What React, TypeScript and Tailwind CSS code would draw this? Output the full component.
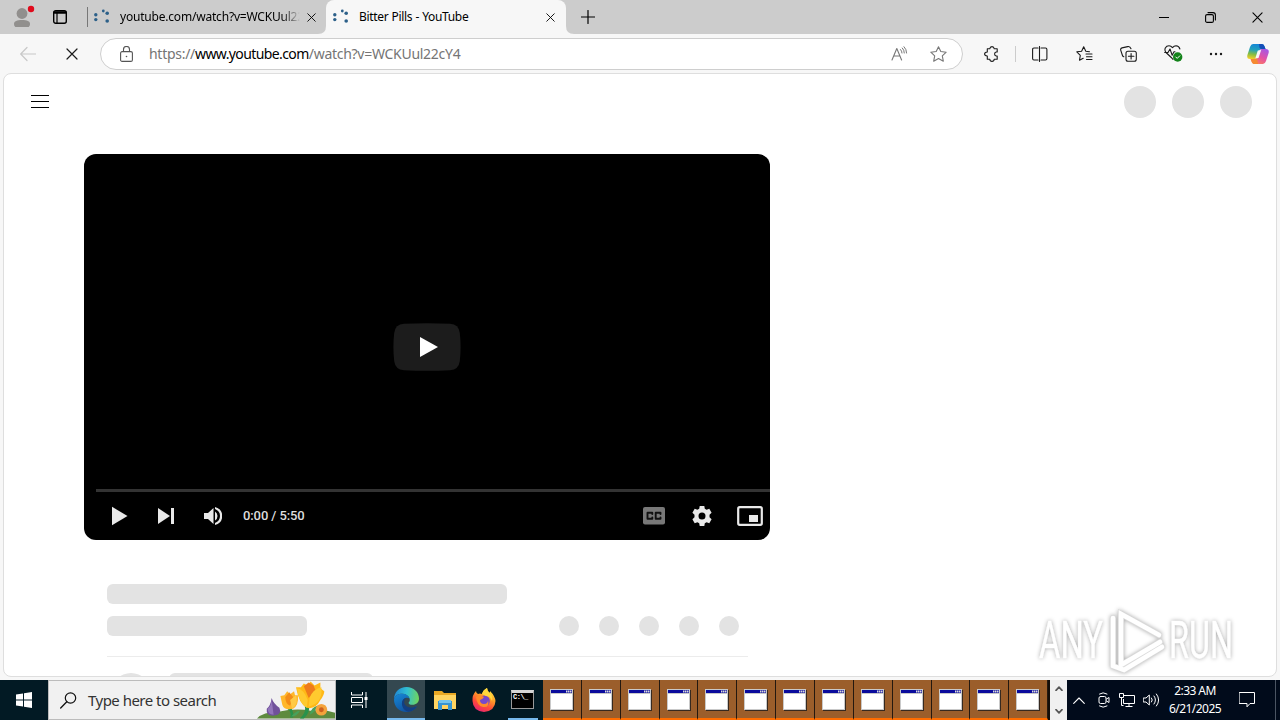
import type { ReactNode } from "react";

type IconProps = {
  w: number;
  h?: number;
  box?: string;
  className?: string;
  children: ReactNode;
};

const Icon = ({ w, h = w, box, className = "", children }: IconProps) => (
  <svg
    width={w}
    height={h}
    viewBox={box ?? `0 0 ${w} ${h}`}
    fill="none"
    stroke="currentColor"
    strokeLinecap="round"
    strokeLinejoin="round"
    className={`block shrink-0 ${className}`}
  >
    {children}
  </svg>
);

const CloseIcon = ({ size }: { size: number }) => (
  <Icon w={size} box="0 0 12 12">
    <path d="M1 1L11 11M11 1L1 11" strokeWidth="1.2" />
  </Icon>
);

const LoadingDots = () => (
  <Icon w={16}>
    <g fill="#2c6089" stroke="none">
      <circle cx="1.8" cy="5.8" r="1.7" />
      <circle cx="1.8" cy="10.6" r="1.7" />
      <circle cx="9.3" cy="2" r="1.4" />
      <circle cx="13.2" cy="4.3" r="1.8" />
      <circle cx="13.2" cy="12" r="1.8" />
    </g>
  </Icon>
);

const TabBar = () => (
  <div className="flex h-[34px] bg-[#cccccc] text-black">
    <div className="flex w-[87px] items-center pl-[14px]">
      <Icon w={22} className="mt-[-2px]">
        <g stroke="none">
          <circle cx="8" cy="8.5" r="5.4" fill="#918f8d" />
          <path d="M0 19c0-3 3-4 8-4s8 1 8 4-3 5-8 5-8-2-8-5z" fill="#918f8d" />
          <circle cx="17" cy="4" r="3.2" fill="#e00b1c" />
        </g>
      </Icon>
      <Icon w={14} className="ml-[17px]">
        <rect x="0.7" y="0.7" width="12.6" height="12.6" rx="2" strokeWidth="1.4" />
        <path d="M1.5 2.5H12.5" strokeWidth="2.4" />
        <path d="M4 3V13" strokeWidth="1.2" />
      </Icon>
    </div>
    <div className="flex w-[239px] items-center">
      <div className="mr-[6px] h-5 w-px bg-[#777]" />
      <LoadingDots />
      <p className="ml-[10px] w-[180px] overflow-hidden whitespace-nowrap bg-gradient-to-r from-black from-88% to-[#cccccc] bg-clip-text font-['Noto_Sans',sans-serif] text-[12px] tracking-[-0.2px] text-transparent">
        youtube.com/watch?v=WCKUul22
      </p>
      <div className="ml-[7px]">
        <CloseIcon size={9} />
      </div>
    </div>
    <div className="relative flex w-[240px] items-center rounded-t-lg bg-[#f7f7f7] pl-[7px]">
      <LoadingDots />
      <p className="ml-[10px] w-[187px] whitespace-nowrap font-['Noto_Sans',sans-serif] text-[12px] tracking-[-0.34px] [word-spacing:0.5px]">
        Bitter Pills - YouTube
      </p>
      <CloseIcon size={9} />
      <Icon w={8} className="absolute bottom-0 -left-2">
        <path d="M8 0V8H0Q8 8 8 0Z" fill="#f7f7f7" stroke="none" />
      </Icon>
      <Icon w={8} className="absolute -right-2 bottom-0">
        <path d="M0 0V8H8Q0 8 0 0Z" fill="#f7f7f7" stroke="none" />
      </Icon>
    </div>
    <div className="ml-[15px] flex items-center">
      <Icon w={14}>
        <path d="M7 0.5V13.5M0.5 7H13.5" strokeWidth="1.2" />
      </Icon>
    </div>
    <div className="mr-[17px] ml-auto flex items-center">
      <Icon w={10}>
        <path d="M0 5.5H10" />
      </Icon>
      <Icon w={11} className="ml-[36px]">
        <rect x="0.6" y="2.6" width="7.8" height="7.8" rx="1.5" strokeWidth="1.1" />
        <path d="M3 0.6H8Q10.4 0.6 10.4 3V8" strokeWidth="1.1" />
      </Icon>
      <div className="ml-[36px]">
        <CloseIcon size={11} />
      </div>
    </div>
  </div>
);

const Toolbar = () => (
  <div className="flex h-[39px] items-center bg-[#f7f7f7] text-[#1b1b1b]">
    <Icon w={16} className="ml-5 text-[#c8c8c8]">
      <path d="M15.5 8H1M7 1.5L0.7 8L7 14.5" strokeWidth="1.2" />
    </Icon>
    <div className="ml-[30px] flex w-[34px]">
      <CloseIcon size={12} />
    </div>
    <div className="flex h-[32px] w-[863px] items-center rounded-full border border-[#cecece] bg-white pr-[15px] pl-[19px]">
      <Icon w={13} h={16} className="text-[#555]">
        <rect x="0.6" y="5.6" width="11.8" height="9.8" rx="1.5" strokeWidth="1.1" />
        <path d="M3.5 5.5V3.5a3 3 0 0 1 6 0V5.5" strokeWidth="1.1" />
        <circle cx="6.5" cy="10.5" r="0.8" fill="currentColor" stroke="none" />
      </Icon>
      <p className="ml-[16px] whitespace-nowrap font-['Noto_Sans',sans-serif] text-[14px] tracking-[-0.28px] text-[#757575]">
        https://<span className="tracking-[-0.6px] text-black">www.youtube.com</span>/watch?v=WCKUul22cY4
      </p>
      <Icon w={17} h={16} className="ml-auto text-[#777]">
        <path d="M1 14L5.8 2.5L10.6 14M2.8 10H8.8" strokeWidth="1.1" />
        <path d="M9.5 3.5Q11 5 11 7M11.3 2Q13.3 4 13.3 7M13 0.7Q15.6 3.3 15.6 7" />
      </Icon>
      <Icon w={17} h={16} className="ml-[22px] text-[#777]">
        <path d="M8.5 0.7L10.8 5.5L16.2 6.2L12.3 9.9L13.3 15.2L8.5 12.6L3.7 15.2L4.7 9.9L0.8 6.2L6.2 5.5Z" strokeWidth="1.1" />
      </Icon>
    </div>
    <Icon w={16} className="ml-[21px]">
      <path d="M3.3 2.7H5.8Q6 0.6 8 0.6T10.2 2.7H13.2V6H12.2Q10.6 6.2 10.6 8T12.2 10H13.2V13.2H10.2Q10 15.4 8 15.4T5.8 13.2H3.3V10Q0.6 9.9 0.6 8T3.3 6Z" strokeWidth="1.1" />
    </Icon>
    <div className="ml-[15px] h-4 w-px bg-[#ccc]" />
    <Icon w={16} className="ml-[16px]">
      <path d="M6 2H2Q0.6 2 0.6 3.4V12.6Q0.6 14 2 14H6M9 2H13.5Q14.9 2 14.9 3.4V12.6Q14.9 14 13.5 14H9M7.5 0.5V15.5" strokeWidth="1.1" />
    </Icon>
    <Icon w={17} h={16} className="ml-[28px]">
      <path d="M13.5 5.7L9.8 5.2L7.7 0.8L5.6 5.2L0.8 5.8L4.3 9.3L3.5 14.2L7.2 12.3M10 8H16M10.5 10.8H16M10.5 13.5H16" strokeWidth="1.1" />
    </Icon>
    <Icon w={17} h={16} className="ml-[27px]">
      <rect x="6" y="5.3" width="10.3" height="10" rx="2" strokeWidth="1.1" />
      <path d="M11.1 7.5V13M8.4 10.2H13.9M3.8 10.8Q2.7 10.4 2.3 9L0.7 4.1Q0.3 2.4 2 1.9L7.7 0.6Q10 0.2 11 2.8" strokeWidth="1.1" />
    </Icon>
    <Icon w={19} h={17} className="ml-[27px]">
      <path d="M9 14.3L7.8 13L2 7.5Q0.3 5.4 1.3 3Q2.5 0.8 5 0.8Q7 0.8 8.5 2.6Q10 0.8 12 0.8Q15 1 15.9 4" strokeWidth="1.1" />
      <path d="M0.7 7.5H4L6 4L8.2 10.2L10 6.8H11" strokeWidth="1.1" />
      <circle cx="13.7" cy="12" r="4.7" fill="#13831a" stroke="none" />
      <path d="M11.8 12L13.2 13.4L15.8 10.8" stroke="white" />
    </Icon>
    <Icon w={14} h={4} className="ml-[26px]">
      <g fill="currentColor" stroke="none">
        <circle cx="2" cy="2" r="1.2" />
        <circle cx="7" cy="2" r="1.2" />
        <circle cx="12" cy="2" r="1.2" />
      </g>
    </Icon>
    <CopilotLogo />
  </div>
);

const CopilotLogo = () => (
  <Icon w={22} h={20} className="ml-6">
    <defs>
      <linearGradient id="cpA" x1="0.5" y1="0" x2="0.3" y2="1">
        <stop offset="0" stopColor="#1585d8" />
        <stop offset="0.4" stopColor="#22a2bb" />
        <stop offset="0.7" stopColor="#87bd42" />
        <stop offset="1" stopColor="#f1ce29" />
      </linearGradient>
      <linearGradient id="cpB" x1="0.8" y1="0" x2="0.2" y2="1">
        <stop offset="0" stopColor="#a558e5" />
        <stop offset="0.5" stopColor="#e452a4" />
        <stop offset="1" stopColor="#ff8454" />
      </linearGradient>
    </defs>
    <g stroke="none">
      <path d="M6 0H15Q17 0 17.8 3L18.5 5H15Q12.5 5 11.7 8L10 13Q9.2 15 7 15H3Q-0.5 15 0.4 11L3 3Q4 0 6 0Z" fill="url(#cpA)" />
      <path d="M12 0H15Q17 0 17.8 3L18.5 5H15Q13 5 12.4 3.5Z" fill="#154fb8" />
      <path d="M16 20H7Q5 20 4.2 17L3.5 15H7Q9.5 15 10.3 12L12 7Q12.8 5 15 5H19Q22.5 5 21.6 9L19 17Q18 20 16 20Z" fill="url(#cpB)" />
      <path d="M4 15H7Q9 15 9.8 13L11 20H7Q5 20 4 15Z" fill="#f58a32" />
      <path d="M10.8 6.5L14.2 6L11.5 14L8.3 14.5Z" fill="#f7f7f7" />
    </g>
  </Icon>
);

const Player = () => (
  <div className="relative flex h-[386px] w-[686px] flex-col overflow-hidden rounded-xl bg-black text-[#e9e9e9]">
    <div className="flex h-[335px] items-end justify-center pb-[118px]">
      <Icon w={68} h={48}>
        <path d="M11 0.8Q34 -0.5 57 0.8Q65.8 1.4 66.8 10Q68.4 24 66.8 38Q65.8 46.6 57 47.2Q34 48.5 11 47.2Q2.2 46.6 1.2 38Q-0.4 24 1.2 10Q2.2 1.4 11 0.8Z" fill="#1c1c1c" stroke="none" />
        <path d="M27 14L45 24L27 34Z" fill="white" stroke="none" />
      </Icon>
    </div>
    <div className="ml-3 h-[3px] shrink-0 bg-[#333]" />
    <div className="flex h-[48px] items-center pr-[7px] pl-[28px]">
      <Icon w={16} h={20}>
        <path d="M0 0.8L15.5 10L0 19.2Z" fill="currentColor" stroke="none" />
      </Icon>
      <Icon w={17} h={18} className="ml-[30px]">
        <path d="M0 1L12 9L0 17ZM13 1H16V17H13Z" fill="currentColor" stroke="none" />
      </Icon>
      <Icon w={18} h={18} className="ml-[29px]">
        <path d="M0 6V12H4L9.5 17V1L4 6ZM11 4.5V13.5Q13.5 12 13.5 9T11 4.5ZM11 0V2.1Q16 4 16 9T11 15.9V18Q18.2 16 18.2 9T11 0Z" fill="currentColor" stroke="none" />
      </Icon>
      <p className="mb-[1px] ml-[21px] font-['Roboto',sans-serif] text-[13px] font-medium tracking-[-0.1px] whitespace-nowrap text-[#ddd]">
        0:00 / 5:50
      </p>
      <Icon w={22} h={18} className="ml-auto">
        <rect width="22" height="17.5" rx="2" fill="#787878" stroke="none" />
        <path d="M9.3 7V5.8H4.5V11.7H9.3V10.5M17.5 7V5.8H12.7V11.7H17.5V10.5" stroke="#111" strokeWidth="1.9" />
      </Icon>
      <Icon w={20} className="ml-[27px]">
        <path
          fillRule="evenodd"
          fill="currentColor"
          stroke="none"
          d="M7.7 0H12.3L12.8 2.8L14.6 3.8L17.3 2.8L19.6 6.8L17.5 8.8V11.2L19.6 13.2L17.3 17.2L14.6 16.2L12.8 17.2L12.3 20H7.7L7.2 17.2L5.4 16.2L2.7 17.2L0.4 13.2L2.5 11.2V8.8L0.4 6.8L2.7 2.8L5.4 3.8L7.2 2.8ZM10 6.5A3.5 3.5 0 1 0 10 13.5A3.5 3.5 0 1 0 10 6.5Z"
        />
      </Icon>
      <Icon w={26} h={20} className="ml-[25px]">
        <rect x="1.2" y="1.2" width="23.6" height="17.6" rx="1.5" strokeWidth="2.2" />
        <path d="M12 9H21V16H12Z" fill="currentColor" stroke="none" />
      </Icon>
    </div>
  </div>
);

const Watermark = () => (
  <Icon w={206} h={70} className="absolute right-[37px] bottom-[-1px] overflow-visible drop-shadow-[0_0_2px_#a8a8a8]">
    <g fill="white" stroke="white" strokeWidth="0.5" fontFamily="Roboto, sans-serif" fontSize="52" fontWeight="400">
      <text x="6" y="51" textLength="64" lengthAdjust="spacingAndGlyphs">ANY</text>
      <text x="136" y="51" textLength="64" lengthAdjust="spacingAndGlyphs">RUN</text>
    </g>
    <g strokeLinejoin="miter">
      <path d="M80 54V11M88 58V7L126 28M88 58L127 35M80 54V59L91 63L129 40" stroke="#dcdcdc" strokeWidth="6" />
      <path d="M80 54V11M88 58V7L126 28M88 58L127 35M80 54V59L91 63L129 40" stroke="white" strokeWidth="4.6" />
    </g>
  </Icon>
);

const Page = () => (
  <div className="h-[607px] bg-[#f7f7f7] px-[3px]">
    <main className="relative h-[604px] overflow-hidden rounded-lg border border-[#dedede] bg-white">
      <header className="flex h-[56px] items-center justify-between pr-[24px] pl-[27px]">
        <Icon w={18} h={13} className="mb-[2px]">
          <path d="M0 0.5H18M0 6.5H18M0 12.5H18" stroke="black" strokeLinecap="butt" />
        </Icon>
        <div className="flex gap-4">
          {[0, 1, 2].map((idx) => (
            <div key={idx} className="size-8 rounded-full bg-[#e3e3e3]" />
          ))}
        </div>
      </header>
      <div className="mt-[24px] ml-[80px]">
        <Player />
      </div>
      <section className="mt-[44px] ml-[103px] w-[641px]">
        <div className="h-5 w-[400px] rounded-md bg-[#e3e3e3]" />
        <div className="mt-3 flex justify-between border-b border-[#ececec] pr-[9px] pb-5">
          <div className="h-5 w-[200px] rounded-md bg-[#e3e3e3]" />
          <div className="flex gap-5">
            {[0, 1, 2, 3, 4].map((idx) => (
              <div key={idx} className="size-5 rounded-full bg-[#e3e3e3]" />
            ))}
          </div>
        </div>
        <div className="mt-4 flex">
          <div className="ml-1 size-10 rounded-full bg-[#e3e3e3]" />
          <div className="ml-[18px] h-5 w-[204px] rounded-md bg-[#e3e3e3]" />
        </div>
      </section>
      <Watermark />
    </main>
  </div>
);

const Tulips = () => (
  <Icon w={78} h={38} box="0 0 80 38">
    <g stroke="none">
      <path d="M0 38Q6 31 22 31Q40 27 55 30Q68 28 80 32V38Z" fill="#5e8a3e" />
      <path d="M15 17Q17 23 23 27Q26 34 18 35Q9 36 10 28Q14 25 15 17Z" fill="#70519a" />
      <path d="M15 18L17 34Q11 34 11 28Q15 25 15 18Z" fill="#9275ba" />
      <path d="M35 27Q38 32 37 37H34Q36 31 31 28ZM53 25Q55 32 48 38H44Q51 32 49 25Z" fill="#29924c" />
      <path d="M54 34Q56 26 62 25Q60 32 54 34ZM35 36Q40 30 44 30Q41 36 35 36Z" fill="#47a15a" />
      <path d="M24 15L28 14L31 10L34 13L38 10L39 14L42 14Q43 24 37 28Q28 30 26 24Z" fill="#ffb72b" />
      <path d="M29 16L33 11L37 16L34 25Q29 23 29 16Z" fill="#f28c18" />
      <path d="M34 19L40 14Q43 23 36 28Z" fill="#ffca46" />
      <path d="M40 6L45 6L48 2L52 4L55 0L59 4L65 1L65 7L69 10Q69 14 65 19Q60 29 51 27Q43 23 40 6Z" fill="#ffb817" />
      <path d="M48 5L53 1L58 4L60 9L53 17Z" fill="#ee7b1b" />
      <path d="M41 7Q48 8 52 19L51 27Q43 22 41 7ZM54 17Q57 8 66 6Q68 22 53 26Z" fill="#ffca2f" />
      <circle cx="66" cy="29" r="6" fill="#f4a33c" />
      <circle cx="66" cy="29" r="2.5" fill="#ce601c" />
    </g>
  </Icon>
);

const EdgeLogo = () => (
  <Icon w={25} box="0 0 24 24">
    <defs>
      <linearGradient id="edgeTop" x1="0" y1="0.4" x2="1" y2="0.5">
        <stop stopColor="#2087d5" />
        <stop offset="0.5" stopColor="#31bfd2" />
        <stop offset="1" stopColor="#70d45d" />
      </linearGradient>
      <linearGradient id="edgeLow" x1="0" y1="0" x2="0.6" y2="1">
        <stop stopColor="#1689d7" />
        <stop offset="1" stopColor="#104f9c" />
      </linearGradient>
    </defs>
    <g stroke="none">
      <path d="M0 12C0 5 5 0 12 0C19 0 24 5 24 11C24 15 21 17 18 17C15 17 14 16 14 15C15 14 15.5 13 15 11C14 8 11 6.5 8 6.5C4 6.5 1 8 0 12Z" fill="url(#edgeTop)" />
      <path d="M0 12C1 8 4 6.5 8 6.5C11 6.5 14 8 15 11C12 9 8 11 8 15C8 19 12 22 18 20L22 18.5C20 22 16 24 12 24C5 24 0 19 0 12Z" fill="url(#edgeLow)" />
      <path d="M8.5 12.5C6 17 9 23 14 23.8C18 23.3 20.8 21 22.2 18.2C17 21 10.5 19.5 9.8 15C9.6 13 10.5 11.5 11.5 10.5Q9.5 11 8.5 12.5Z" fill="#123f83" />
    </g>
  </Icon>
);

const FolderIcon = () => (
  <Icon w={22} h={20}>
    <g stroke="none">
      <path d="M0 1H8L10 3H22V19H0Z" fill="#e9a824" />
      <path d="M0 5H22V19H0Z" fill="#ffd461" />
      <path d="M4 11H18V20H14V15H8V20H4Z" fill="#3694d1" />
      <path d="M5 10H17V13H5Z" fill="#72c4ee" />
    </g>
  </Icon>
);

const FirefoxLogo = () => (
  <Icon w={24}>
    <defs>
      <linearGradient id="ffBody" x1="0.8" y1="0" x2="0.3" y2="1">
        <stop stopColor="#fff04b" />
        <stop offset="0.4" stopColor="#ff9a27" />
        <stop offset="0.7" stopColor="#ff4b38" />
        <stop offset="1" stopColor="#e62372" />
      </linearGradient>
    </defs>
    <g stroke="none">
      <path d="M4 3Q4 5 6 6Q8 5 10 6Q11 2 15 0Q15 3 18 5Q18 4 18 3Q23 8 23.5 13Q23 23 12 24Q1 23 0.5 13Q0 7 4 3Z" fill="url(#ffBody)" />
      <circle cx="12.3" cy="13" r="5.5" fill="#7549cb" />
      <path d="M4 9Q8 6 12 9Q11 11 8 12Q8 16 12 16Q16 16 16 12Q18 20 11 19Q5 18 4 9Z" fill="#ff8b29" />
      <path d="M10 6Q11 2 15 0Q15 3 18 5Q21 8 20 13Q18 8 14 8Z" fill="#ffd83c" />
    </g>
  </Icon>
);

const ConsoleIcon = () => (
  <div className="h-[19px] w-[23px] border border-[#999] border-t-[3px] border-t-[#d5d5d5] bg-black pl-px font-['Liberation_Mono',monospace] text-[7px] leading-[8px] font-bold tracking-[-0.5px] text-white">
    C:\_
  </div>
);

const AppWindowIcon = () => (
  <Icon w={24} h={22} className="mt-[2px]">
    <g stroke="none">
      <path d="M1 1H24V22H1Z" fill="#36291f" />
      <path d="M0 0H23V21H0Z" fill="#c9c9c9" />
      <path d="M1 1H22V4H1Z" fill="#0a0b9c" />
      <path d="M1 5H22V20H1Z" fill="white" />
      <path d="M16 1.5H17.5V3.5H16ZM18 1.5H19.5V3.5H18ZM20 1.5H21.5V3.5H20Z" fill="#ddd" />
    </g>
  </Icon>
);

const windows = Array.from({ length: 13 }, (_, idx) => idx);

const Taskbar = () => (
  <footer className="flex h-10 bg-[#021a24]">
    <div className="flex w-[48px] items-center justify-center">
      <Icon w={16}>
        <path d="M0 2.4L7 1.4V7.5H0ZM8 1.2L16 0V7.5H8ZM0 8.5H7V14.6L0 13.6ZM8 8.5H16V16L8 14.8Z" fill="white" stroke="none" />
      </Icon>
    </div>
    <div className="flex w-[288px] items-center border border-[#bcbcbc] bg-[#f1f1f1] pl-[11px]">
      <Icon w={17} className="text-[#111]">
        <circle cx="10.5" cy="6" r="5.2" strokeWidth="1.2" />
        <path d="M6.8 9.7L0.7 16" strokeWidth="1.3" />
      </Icon>
      <p className="ml-[11px] whitespace-nowrap font-['Noto_Sans',sans-serif] text-[15px] tracking-[-0.52px] text-[#333]">
        Type here to search
      </p>
      <div className="ml-auto self-end">
        <Tulips />
      </div>
    </div>
    <div className="flex w-[51px] items-center justify-center pr-1 text-white">
      <Icon w={17} h={16}>
        <g strokeLinecap="butt">
          <path d="M0.5 0V3H11.5V0M0.5 16V13H11.5V16M0.5 5.5H11.5V10.5H0.5ZM15 0V16" />
          <path d="M13.5 5H16.5V8H13.5Z" fill="white" stroke="none" />
        </g>
      </Icon>
    </div>
    <div className="flex w-[38px] items-center justify-center border-b-2 border-[#76b9ed] bg-[#344850]">
      <EdgeLogo />
    </div>
    <div className="flex w-[39px] items-center justify-center">
      <FolderIcon />
    </div>
    <div className="flex w-[40px] items-center justify-center">
      <FirefoxLogo />
    </div>
    <div className="flex w-[39px] items-center justify-center pr-[2px]">
      <div className="flex h-10 w-[30px] items-center justify-center border-b-2 border-[#76b9ed]">
        <ConsoleIcon />
      </div>
    </div>
    <div className="flex w-[507px] bg-[#140d09]">
      {windows.map((idx) => (
        <div key={idx} className="flex w-[38.86px] shrink-0 items-center border-r border-b-2 border-r-[#24180f] border-b-[#ff6c00] bg-[#9b5e2b] pl-[7px]">
          <AppWindowIcon />
        </div>
      ))}
    </div>
    <div className="flex w-[17px] flex-col items-center justify-between bg-[#f0f0f0] py-[6px] text-[#555]">
      <Icon w={8} h={5}>
        <path d="M1 4.3L4 1.2L7 4.3" strokeWidth="1.7" />
      </Icon>
      <Icon w={8} h={5}>
        <path d="M1 0.7L4 3.8L7 0.7" strokeWidth="1.7" />
      </Icon>
    </div>
    <div className="flex flex-1 items-center bg-[#010b1b] pl-[6px] text-white">
      <Icon w={12} h={7}>
        <path d="M0.7 6.3L6 1L11.3 6.3" strokeWidth="1.1" />
      </Icon>
      <Icon w={12} h={16} className="ml-[13px]">
        <rect x="1" y="4.5" width="7" height="7" rx="1.5" />
        <path d="M8.5 7L11 5.5V10.5L8.5 9M1.5 2Q5 -0.5 9 2M1.5 14Q5 16.5 9 14" />
      </Icon>
      <Icon w={16} h={14} className="ml-[9px]">
        <path d="M5 2.5H15.5V10.5H4.5V6M10 10.5V13.5M6.5 13.5H13.5M0.5 0.5H4.5V4.5H0.5ZM2.5 4.5V12.5H4.5" strokeLinecap="butt" />
      </Icon>
      <Icon w={17} h={14} className="ml-[8px]">
        <path d="M0.6 5H3L6.3 2V12L3 9H0.6ZM8.5 5Q10.2 7 8.5 9M11 3Q14 7 11 11M13.4 1Q18 7 13.4 13" />
      </Icon>
      <div className="ml-[4px] w-[62px] text-center font-['Noto_Sans',sans-serif] text-[12px] leading-[18px] tracking-[-0.55px] whitespace-nowrap">
        <p>2:33 AM</p>
        <p>6/21/2025</p>
      </div>
      <Icon w={16} h={16} className="ml-[13px]">
        <path d="M0.5 0.5H15.5V11.5H11L8 14.8V11.5H0.5Z" />
      </Icon>
      <div className="mr-[4px] ml-auto h-10 w-px bg-[#4b5563]" />
    </div>
  </footer>
);

const App = () => (
  <div className="h-[720px] w-[1280px] overflow-hidden">
    <TabBar />
    <Toolbar />
    <Page />
    <Taskbar />
  </div>
);

export default App;
